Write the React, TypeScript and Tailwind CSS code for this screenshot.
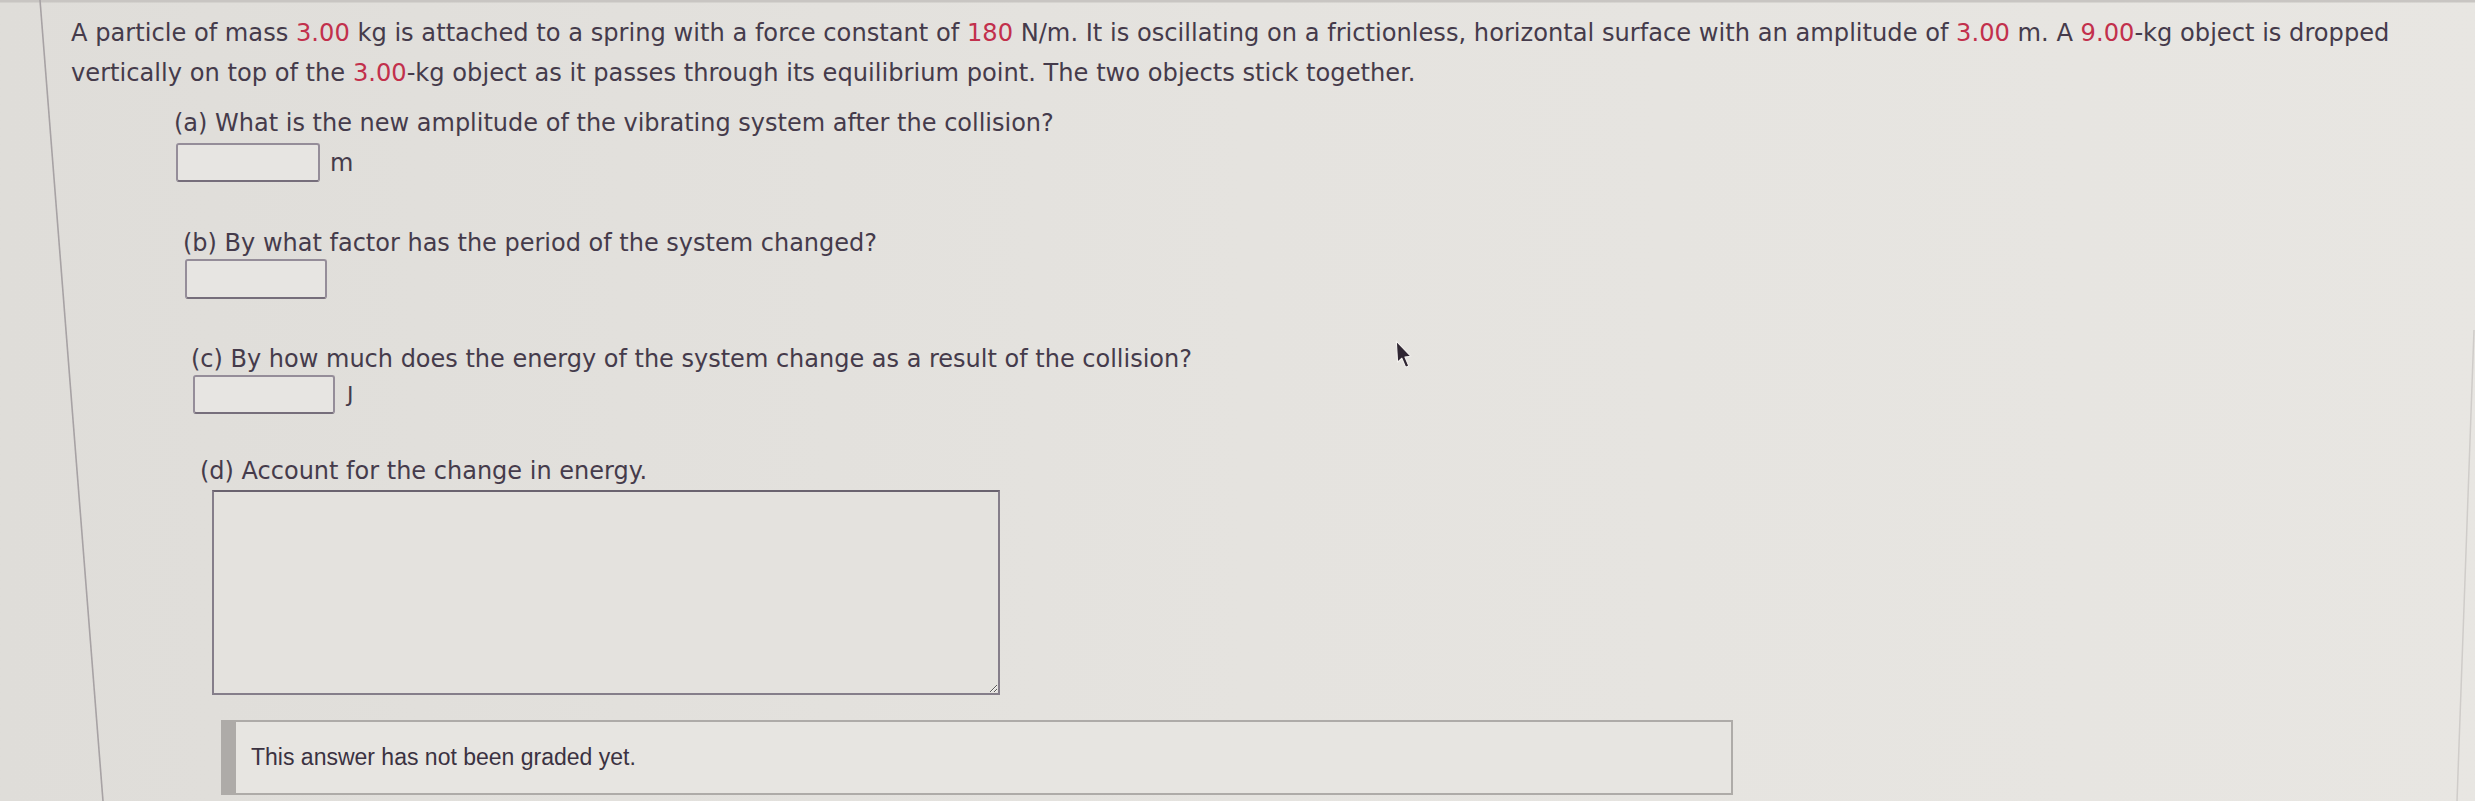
import React from "react";

const RED = "text-[#c2304c]";

function Num({ children }: { children: React.ReactNode }) {
  return <span className={RED}>{children}</span>;
}

function Cursor() {
  return (
    <svg
      className="pointer-events-none absolute left-[1394px] top-[340px] h-[30px] w-[19px]"
      viewBox="0 0 17 27"
    >
      <path
        d="M2 1 L3.2 20 L7 16.4 L10.4 24.5 L13.2 23.3 L9.8 15.4 L15 14.6 Z"
        fill="#2f2632"
        stroke="#f3f1ee"
        strokeWidth="1"
        strokeLinejoin="round"
      />
    </svg>
  );
}

// edges of the monitor panel, photographed at a slight angle
function PanelEdges() {
  return (
    <svg
      className="pointer-events-none absolute inset-0 h-[801px] w-[2475px]"
      viewBox="0 0 2475 801"
    >
      <line x1="0" y1="1" x2="2475" y2="1" stroke="#c8c5c2" strokeWidth="3" />
      <line x1="40" y1="0" x2="103" y2="801" stroke="#a7a2a4" strokeWidth="1.6" />
      <line x1="2474" y1="330" x2="2457" y2="801" stroke="#cfccc9" strokeWidth="1.5" />
    </svg>
  );
}

export default function App() {
  return (
    <div className="relative h-[801px] w-full overflow-hidden bg-linear-to-r from-[#dfddd9] via-[#e5e3df] to-[#e8e6e2] font-['DejaVu_Sans',Verdana,sans-serif] text-[#453b4b]">
      <PanelEdges />

      <div className="relative pl-[71px] pt-[13px]">
        <p className="whitespace-nowrap text-[24.15px] leading-[40px]">
          A particle of mass <Num>3.00</Num> kg is attached to a spring with a force constant of{" "}
          <Num>180</Num> N/m. It is oscillating on a frictionless, horizontal surface with an
          amplitude of <Num>3.00</Num> m. A <Num>9.00</Num>-kg object is dropped
          <br />
          vertically on top of the <Num>3.00</Num>-kg object as it passes through its equilibrium
          point. The two objects stick together.
        </p>

        {/* (a) */}
        <div className="mt-[14px]">
          <p className="ml-[103px] text-[24px] leading-[32px]">
            (a) What is the new amplitude of the vibrating system after the collision?
          </p>
          <div className="ml-[105px] mt-[4px] flex items-center gap-[10px]">
            <input
              type="text"
              className="h-[39px] w-[144px] rounded-[3px] border-2 border-[#958d99] border-b-[#766e7b] bg-[#e7e5e2] outline-none"
            />
            <span className="text-[24px] leading-[32px]">m</span>
          </div>
        </div>

        {/* (b) */}
        <div className="mt-[45px]">
          <p className="ml-[112px] text-[24px] leading-[32px]">
            (b) By what factor has the period of the system changed?
          </p>
          <div className="ml-[114px] flex items-center">
            <input
              type="text"
              className="h-[40px] w-[142px] rounded-[3px] border-2 border-[#958d99] border-b-[#766e7b] bg-[#e7e5e2] outline-none"
            />
          </div>
        </div>

        {/* (c) */}
        <div className="mt-[44px]">
          <p className="ml-[120px] text-[24px] leading-[32px]">
            (c) By how much does the energy of the system change as a result of the collision?
          </p>
          <div className="ml-[122px] flex items-center gap-[12px]">
            <input
              type="text"
              className="h-[39px] w-[142px] rounded-[3px] border-2 border-[#958d99] border-b-[#766e7b] bg-[#e7e5e2] outline-none"
            />
            <span className="text-[22px] leading-[32px]">J</span>
          </div>
        </div>

        {/* (d) */}
        <div className="mt-[41px]">
          <p className="ml-[129px] text-[24px] leading-[32px]">(d) Account for the change in energy.</p>
          <textarea className="ml-[141px] mt-[3px] block h-[205px] w-[788px] border-2 border-[#857e8a] border-t-[#6a636f] bg-[#e4e2de] outline-none" />
        </div>

        <div className="ml-[150px] mt-[25px] flex h-[75px] w-[1512px] items-center border-2 border-l-[15px] border-[#aeaba8] bg-[#e7e5e1] pl-[15px]">
          <span className="font-['Liberation_Sans',Arial,sans-serif] text-[23px] text-[#3b3241]">
            This answer has not been graded yet.
          </span>
        </div>
      </div>

      <Cursor />
    </div>
  );
}
